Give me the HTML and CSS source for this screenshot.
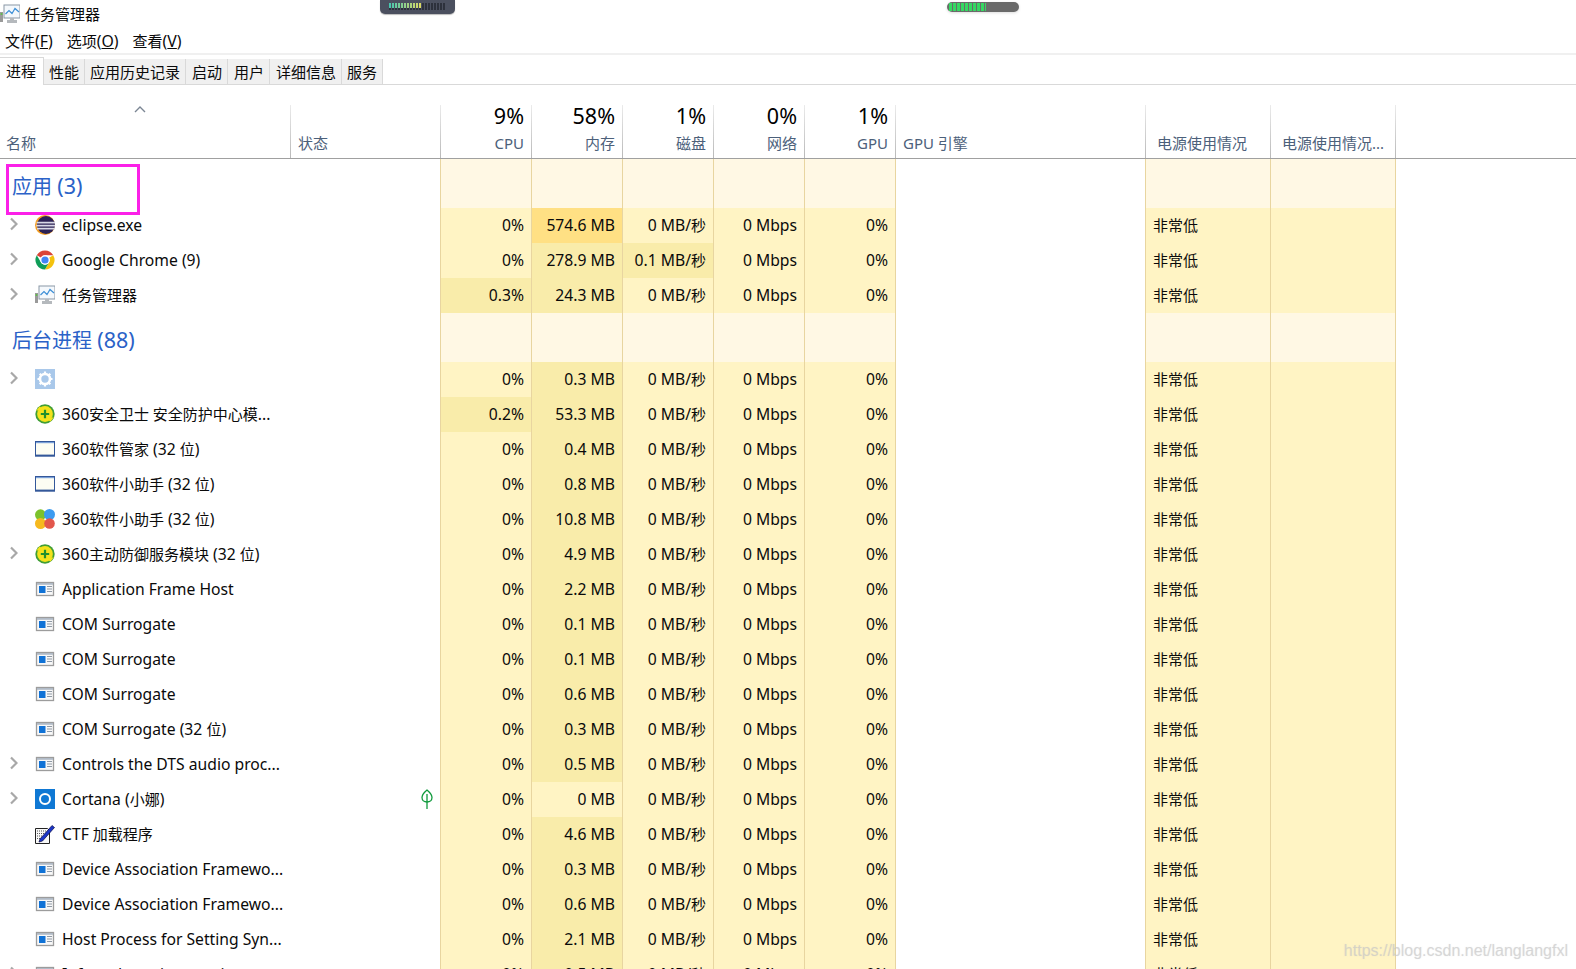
FILE: index.html
```html
<!DOCTYPE html>
<html lang="zh-CN">
<head>
<meta charset="utf-8">
<title>任务管理器</title>
<link rel="stylesheet" href="styles.css">
</head>
<body>
<svg class="sprite" xmlns="http://www.w3.org/2000/svg">
  <symbol id="i-chev" viewBox="0 0 8 14"><path d="M1 1.500 6.500 7 1 12.500" fill="none" stroke="#a8a8a8" stroke-width="2.200"/></symbol>
  <symbol id="i-tm" viewBox="0 0 20 20"><rect x="0" y="8" width="3" height="10" fill="#9a9a9a"/><rect x="0.700" y="9" width="1.600" height="2" fill="#5fc04a"/><rect x="4" y="1" width="16" height="13" fill="#f4f8fc" stroke="#8a97a5"/><path d="M5.500 10 9 6.500l3 3 3-5 4 3.500" fill="none" stroke="#3d8fd6" stroke-width="1.200"/><path d="M10 14h4v2h3v3H7v-3h3z" fill="#b5b9bd"/></symbol>
  <symbol id="i-eclipse" viewBox="0 0 20 20"><circle cx="10" cy="10" r="10" fill="#f39c1f"/><circle cx="11" cy="10" r="9" fill="#2c2255"/><path d="M1.600 6.800h18.800v1.800H1.600zM1.200 9.800h19.600v1.800H1.200zM2 12.800h18v1.800H2z" fill="#d8d8e6"/></symbol>
  <symbol id="i-chrome" viewBox="0 0 20 20"><path d="M10 .5a9.500 9.500 0 0 1 8.230 4.750H10a4.750 4.750 0 0 0-4.110 2.370L1.770 5.250A9.500 9.500 0 0 1 10 .5z" fill="#db4437"/><path d="M18.230 5.250A9.500 9.500 0 0 1 10 19.500l4.110-7.130a4.750 4.750 0 0 0 0-4.740z" fill="#f4c20d"/><path d="M1.770 5.250l4.120 7.120a4.750 4.750 0 0 0 8.220 0L10 19.500A9.500 9.500 0 0 1 1.770 5.250z" fill="#0f9d58"/><circle cx="10" cy="10" r="4.750" fill="#fff"/><circle cx="10" cy="10" r="3.600" fill="#4285f4"/></symbol>
  <symbol id="i-gear" viewBox="0 0 20 20"><rect width="20" height="20" fill="#a9c8ea"/><circle cx="10" cy="10" r="5" fill="none" stroke="#fff" stroke-width="2.600"/><path d="M10 2.500v15M2.500 10h15M4.700 4.700l10.600 10.600M15.300 4.700 4.700 15.300" stroke="#fff" stroke-width="2.200" stroke-dasharray="3 9 3"/></symbol>
  <symbol id="i-360" viewBox="0 0 20 20"><circle cx="10" cy="10" r="9.700" fill="#3f9e35"/><circle cx="10" cy="10" r="7.900" fill="#f3e21c"/><path d="M1 7 4.500 2.500 8 4.500zM19 13l-3.500 4.500-3.500-2z" fill="#f3e21c"/><path d="M10 5.800v8.400M5.800 10h8.400" stroke="#1f8f2e" stroke-width="2.200"/></symbol>
  <symbol id="i-win" viewBox="0 0 20 20"><rect x="0.500" y="2.500" width="19" height="14.500" fill="#fdfdf3" stroke="#34589a"/><rect x="0" y="15.600" width="20" height="1.800" fill="#34589a"/><rect x="1" y="3" width="18" height="1.200" fill="#7aa0d8"/></symbol>
  <symbol id="i-balls" viewBox="0 0 20 20"><circle cx="5.500" cy="5.800" r="5.500" fill="#7cc22c"/><circle cx="14.500" cy="5.500" r="5.500" fill="#3c9bf0"/><circle cx="5.500" cy="14.500" r="5.500" fill="#f6b91e"/><circle cx="14.500" cy="14.500" r="5.300" fill="#e2574c"/></symbol>
  <symbol id="i-app" viewBox="0 0 20 20"><rect x="1.500" y="3.500" width="17" height="13" fill="#f8f8f8" stroke="#9c9c9c" stroke-width="1.300"/><rect x="2" y="4" width="16" height="1.800" fill="#b0bac6"/><rect x="4" y="7" width="6.500" height="7" fill="#1072d6"/><path d="M12 7.500h5M12 10h5M12 12.500h5" stroke="#8f99a5"/></symbol>
  <symbol id="i-cortana" viewBox="0 0 20 20"><rect width="20" height="20" fill="#0f78d4"/><circle cx="10" cy="10" r="5" fill="none" stroke="#fff" stroke-width="2"/></symbol>
  <symbol id="i-ctf" viewBox="0 0 20 20"><path d="M.5 4.500h12l2 2v13H.5z" fill="#f8f8f8" stroke="#222"/><path d="M2 7h9M2 9.500h7M2 12h6M2 14.500h5" stroke="#555" stroke-dasharray="1 1"/><path d="M5 15 17 1.500l2.500 2L7.500 17l-3.500 1z" fill="#1a35c8" stroke="#0a0a40" stroke-width=".7"/></symbol>
  <symbol id="i-leaf" viewBox="0 0 12 20"><path d="M6 1C3 3.500 1 6 1 8.500 1 11 3 13 6 13s5-2 5-4.500C11 6 9 3.500 6 1z" fill="none" stroke="#0f9a3c" stroke-width="1.300"/><path d="M6 5v15" stroke="#0f9a3c" stroke-width="1.300"/></symbol>
</svg>

<div class="meter-dark"><span class="meter-dark-fill"></span></div>
<div class="meter-pill"><span class="meter-pill-fill"></span></div>
<div class="watermark">https://blog.csdn.net/langlangfxl</div>

<header class="titlebar"><svg class="title-icon"><use href="#i-tm"/></svg><span>任务管理器</span></header>
<nav class="menubar">
  <span>文件<span class="paren">(<u>F</u>)</span></span><span>选项<span class="paren">(<u>O</u>)</span></span><span>查看<span class="paren">(<u>V</u>)</span></span>
</nav>
<div class="tabs">
  <span class="tab active">进程</span><span class="tab">性能</span><span class="tab">应用历史记录</span><span class="tab roomy">启动</span><span class="tab roomy">用户</span><span class="tab roomy">详细信息</span><span class="tab">服务</span>
</div>

<main class="table">
  <div class="grid head">
    <div class="hc sortable"><svg class="sort" viewBox="0 0 12 7"><path d="M1 6l5-5 5 5" fill="none" stroke="#7b8694" stroke-width="1.400"/></svg><span class="hl">名称</span></div>
    <div class="hc tight"><span class="hl">状态</span></div>
    <div class="hc num"><span class="pct">9%</span><span class="hl">CPU</span></div>
    <div class="hc num"><span class="pct">58%</span><span class="hl">内存</span></div>
    <div class="hc num"><span class="pct">1%</span><span class="hl">磁盘</span></div>
    <div class="hc num"><span class="pct">0%</span><span class="hl">网络</span></div>
    <div class="hc num"><span class="pct">1%</span><span class="hl">GPU</span></div>
    <div class="hc tight"><span class="hl">GPU 引擎</span></div>
    <div class="hc wide"><span class="hl">电源使用情况</span></div>
    <div class="hc wide"><span class="hl">电源使用情况...</span></div>
  </div>

  <div class="grid group">
    <div class="gname">应用 <span class="en">(3)</span><span class="mark"></span></div><div class="line"></div>
    <div class="fill"></div><div class="fill"></div><div class="fill"></div><div class="fill"></div><div class="fill"></div><div class="line"></div><div class="fill"></div><div class="fill"></div>
  </div>

  <div class="grid row"><div class="name"><svg class="chev"><use href="#i-chev"/></svg><svg class="ico"><use href="#i-eclipse"/></svg>eclipse.exe</div><div class="line"></div><div class="v">0%</div><div class="v hot">574.6 MB</div><div class="v">0 MB/<span class="zh">秒</span></div><div class="v">0 Mbps</div><div class="v">0%</div><div class="line"></div><div class="p">非常低</div><div class="p"></div></div>
  <div class="grid row"><div class="name"><svg class="chev"><use href="#i-chev"/></svg><svg class="ico"><use href="#i-chrome"/></svg>Google Chrome (9)</div><div class="line"></div><div class="v">0%</div><div class="v mid">278.9 MB</div><div class="v mid">0.1 MB/<span class="zh">秒</span></div><div class="v">0 Mbps</div><div class="v">0%</div><div class="line"></div><div class="p">非常低</div><div class="p"></div></div>
  <div class="grid row"><div class="name"><svg class="chev"><use href="#i-chev"/></svg><svg class="ico"><use href="#i-tm"/></svg><span class="zh">任务管理器</span></div><div class="line"></div><div class="v mid">0.3%</div><div class="v mid">24.3 MB</div><div class="v">0 MB/<span class="zh">秒</span></div><div class="v">0 Mbps</div><div class="v">0%</div><div class="line"></div><div class="p">非常低</div><div class="p"></div></div>

  <div class="grid group">
    <div class="gname">后台进程 <span class="en">(88)</span></div><div class="line"></div>
    <div class="fill"></div><div class="fill"></div><div class="fill"></div><div class="fill"></div><div class="fill"></div><div class="line"></div><div class="fill"></div><div class="fill"></div>
  </div>

  <div class="grid row"><div class="name"><svg class="chev"><use href="#i-chev"/></svg><svg class="ico"><use href="#i-gear"/></svg></div><div class="line"></div><div class="v">0%</div><div class="v mid">0.3 MB</div><div class="v">0 MB/<span class="zh">秒</span></div><div class="v">0 Mbps</div><div class="v">0%</div><div class="line"></div><div class="p">非常低</div><div class="p"></div></div>
  <div class="grid row"><div class="name"><span class="chev"></span><svg class="ico"><use href="#i-360"/></svg><span>360<span class="zh">安全卫士 安全防护中心模</span>...</span></div><div class="line"></div><div class="v mid">0.2%</div><div class="v mid">53.3 MB</div><div class="v">0 MB/<span class="zh">秒</span></div><div class="v">0 Mbps</div><div class="v">0%</div><div class="line"></div><div class="p">非常低</div><div class="p"></div></div>
  <div class="grid row"><div class="name"><span class="chev"></span><svg class="ico"><use href="#i-win"/></svg><span>360<span class="zh">软件管家</span> (32 <span class="zh">位</span>)</span></div><div class="line"></div><div class="v">0%</div><div class="v mid">0.4 MB</div><div class="v">0 MB/<span class="zh">秒</span></div><div class="v">0 Mbps</div><div class="v">0%</div><div class="line"></div><div class="p">非常低</div><div class="p"></div></div>
  <div class="grid row"><div class="name"><span class="chev"></span><svg class="ico"><use href="#i-win"/></svg><span>360<span class="zh">软件小助手</span> (32 <span class="zh">位</span>)</span></div><div class="line"></div><div class="v">0%</div><div class="v mid">0.8 MB</div><div class="v">0 MB/<span class="zh">秒</span></div><div class="v">0 Mbps</div><div class="v">0%</div><div class="line"></div><div class="p">非常低</div><div class="p"></div></div>
  <div class="grid row"><div class="name"><span class="chev"></span><svg class="ico"><use href="#i-balls"/></svg><span>360<span class="zh">软件小助手</span> (32 <span class="zh">位</span>)</span></div><div class="line"></div><div class="v">0%</div><div class="v mid">10.8 MB</div><div class="v">0 MB/<span class="zh">秒</span></div><div class="v">0 Mbps</div><div class="v">0%</div><div class="line"></div><div class="p">非常低</div><div class="p"></div></div>
  <div class="grid row"><div class="name"><svg class="chev"><use href="#i-chev"/></svg><svg class="ico"><use href="#i-360"/></svg><span>360<span class="zh">主动防御服务模块</span> (32 <span class="zh">位</span>)</span></div><div class="line"></div><div class="v">0%</div><div class="v mid">4.9 MB</div><div class="v">0 MB/<span class="zh">秒</span></div><div class="v">0 Mbps</div><div class="v">0%</div><div class="line"></div><div class="p">非常低</div><div class="p"></div></div>
  <div class="grid row"><div class="name"><span class="chev"></span><svg class="ico"><use href="#i-app"/></svg>Application Frame Host</div><div class="line"></div><div class="v">0%</div><div class="v mid">2.2 MB</div><div class="v">0 MB/<span class="zh">秒</span></div><div class="v">0 Mbps</div><div class="v">0%</div><div class="line"></div><div class="p">非常低</div><div class="p"></div></div>
  <div class="grid row"><div class="name"><span class="chev"></span><svg class="ico"><use href="#i-app"/></svg>COM Surrogate</div><div class="line"></div><div class="v">0%</div><div class="v mid">0.1 MB</div><div class="v">0 MB/<span class="zh">秒</span></div><div class="v">0 Mbps</div><div class="v">0%</div><div class="line"></div><div class="p">非常低</div><div class="p"></div></div>
  <div class="grid row"><div class="name"><span class="chev"></span><svg class="ico"><use href="#i-app"/></svg>COM Surrogate</div><div class="line"></div><div class="v">0%</div><div class="v mid">0.1 MB</div><div class="v">0 MB/<span class="zh">秒</span></div><div class="v">0 Mbps</div><div class="v">0%</div><div class="line"></div><div class="p">非常低</div><div class="p"></div></div>
  <div class="grid row"><div class="name"><span class="chev"></span><svg class="ico"><use href="#i-app"/></svg>COM Surrogate</div><div class="line"></div><div class="v">0%</div><div class="v mid">0.6 MB</div><div class="v">0 MB/<span class="zh">秒</span></div><div class="v">0 Mbps</div><div class="v">0%</div><div class="line"></div><div class="p">非常低</div><div class="p"></div></div>
  <div class="grid row"><div class="name"><span class="chev"></span><svg class="ico"><use href="#i-app"/></svg><span>COM Surrogate (32 <span class="zh">位</span>)</span></div><div class="line"></div><div class="v">0%</div><div class="v mid">0.3 MB</div><div class="v">0 MB/<span class="zh">秒</span></div><div class="v">0 Mbps</div><div class="v">0%</div><div class="line"></div><div class="p">非常低</div><div class="p"></div></div>
  <div class="grid row"><div class="name"><svg class="chev"><use href="#i-chev"/></svg><svg class="ico"><use href="#i-app"/></svg>Controls the DTS audio proc...</div><div class="line"></div><div class="v">0%</div><div class="v mid">0.5 MB</div><div class="v">0 MB/<span class="zh">秒</span></div><div class="v">0 Mbps</div><div class="v">0%</div><div class="line"></div><div class="p">非常低</div><div class="p"></div></div>
  <div class="grid row"><div class="name"><svg class="chev"><use href="#i-chev"/></svg><svg class="ico"><use href="#i-cortana"/></svg><span>Cortana (<span class="zh">小娜</span>)</span></div><div class="line status"><svg class="leaf"><use href="#i-leaf"/></svg></div><div class="v">0%</div><div class="v">0 MB</div><div class="v">0 MB/<span class="zh">秒</span></div><div class="v">0 Mbps</div><div class="v">0%</div><div class="line"></div><div class="p">非常低</div><div class="p"></div></div>
  <div class="grid row"><div class="name"><span class="chev"></span><svg class="ico"><use href="#i-ctf"/></svg><span>CTF <span class="zh">加载程序</span></span></div><div class="line"></div><div class="v">0%</div><div class="v mid">4.6 MB</div><div class="v">0 MB/<span class="zh">秒</span></div><div class="v">0 Mbps</div><div class="v">0%</div><div class="line"></div><div class="p">非常低</div><div class="p"></div></div>
  <div class="grid row"><div class="name"><span class="chev"></span><svg class="ico"><use href="#i-app"/></svg>Device Association Framewo...</div><div class="line"></div><div class="v">0%</div><div class="v mid">0.3 MB</div><div class="v">0 MB/<span class="zh">秒</span></div><div class="v">0 Mbps</div><div class="v">0%</div><div class="line"></div><div class="p">非常低</div><div class="p"></div></div>
  <div class="grid row"><div class="name"><span class="chev"></span><svg class="ico"><use href="#i-app"/></svg>Device Association Framewo...</div><div class="line"></div><div class="v">0%</div><div class="v mid">0.6 MB</div><div class="v">0 MB/<span class="zh">秒</span></div><div class="v">0 Mbps</div><div class="v">0%</div><div class="line"></div><div class="p">非常低</div><div class="p"></div></div>
  <div class="grid row"><div class="name"><span class="chev"></span><svg class="ico"><use href="#i-app"/></svg>Host Process for Setting Syn...</div><div class="line"></div><div class="v">0%</div><div class="v mid">2.1 MB</div><div class="v">0 MB/<span class="zh">秒</span></div><div class="v">0 Mbps</div><div class="v">0%</div><div class="line"></div><div class="p">非常低</div><div class="p"></div></div>
  <div class="grid row"><div class="name"><svg class="chev"><use href="#i-chev"/></svg><svg class="ico"><use href="#i-app"/></svg>Infrared monitor service</div><div class="line"></div><div class="v">0%</div><div class="v mid">0.5 MB</div><div class="v">0 MB/<span class="zh">秒</span></div><div class="v">0 Mbps</div><div class="v">0%</div><div class="line"></div><div class="p">非常低</div><div class="p"></div></div>
</main>
</body>
</html>
```

FILE: styles.css
```css
* { box-sizing: border-box; }
html, body { margin: 0; height: 100%; }
body {
  position: relative;
  height: 969px;
  overflow: hidden;
  background: #fff;
  color: #0a0a0a;
  font: 15px/20px "Noto Sans", "Noto Sans CJK SC", sans-serif;
}
.sprite { display: none; }
.zh { font-size: 15px; }
.paren { font-size: 15.8px; }

.titlebar { height: 28px; display: flex; align-items: center; gap: 5px; }
.title-icon { width: 20px; height: 20px; }
.menubar {
  height: 27px;
  padding: 1px 0 0 5px;
  display: flex;
  align-items: center;
  gap: 14px;
  border-bottom: 2px solid #f0f0f0;
}
.tabs {
  height: 30px;
  display: flex;
  align-items: flex-end;
  border-bottom: 1px solid #d9d9d9;
}
.tab {
  height: 25px;
  padding: 0 5px;
  line-height: 26px;
  background: #f0f0f0;
  border-right: 1px solid #d9d9d9;
}
.tab.roomy { padding: 0 5px 0 6px; }
.tab.active {
  width: 44px;
  height: 28px;
  padding: 0 6px;
  line-height: 27px;
  background: #fff;
  border: 1px solid #d9d9d9;
  border-width: 1px 1px 0 0;
  margin-bottom: -1px;
  position: relative;
}

.table { margin-top: 20px; }
.grid { display: grid; grid-template-columns: 291px 150px 91px 91px 91px 91px 91px 250px 125px 125px; width: 1396px; }

.head { height: 54px; width: 1576px; border-bottom: 1px solid #a0a0a0; }
.hc {
  height: 53px;
  padding: 0 8px 5px;
  display: flex;
  flex-direction: column;
  justify-content: flex-end;
  position: relative;
  border-right: 1px solid #c4c4c4;
  border-image: linear-gradient(#ececec, #b8b8b8) 1;
}
.sortable { padding-left: 6px; }
.tight { padding-left: 7px; }
.num { align-items: flex-end; padding-right: 7px; }
.wide { padding-left: 11px; padding-right: 0; }
.hl { color: #4c607a; white-space: nowrap; }
.pct { font-size: 21.5px; line-height: 26px; color: #000; margin-bottom: 4px; }
.sort { position: absolute; left: 134px; top: 1px; width: 12px; height: 7px; }

.group { height: 49px; }
.gname {
  position: relative;
  padding: 7px 0 0 12px;
  font-size: 20px;
  line-height: 40px;
  color: #2b62c8;
  white-space: nowrap;
}
.gname .en { font-size: 21.5px; }
.mark {
  position: absolute;
  left: 6px;
  top: 5px;
  width: 134px;
  height: 51px;
  border: 3px solid #fb20e8;
  z-index: 2;
}
.line { border-right: 1px solid #e8d5a0; }
.fill { background: #fff8e4; border-right: 1px solid #e8d5a0; }

.row { height: 35px; line-height: 34px; font-size: 15.7px; }
.name { display: flex; align-items: center; white-space: nowrap; padding: 0 0 1px 10px; }
.chev { width: 8px; height: 14px; margin: -2px 17px 0 0; flex: none; }
.ico { width: 20px; height: 20px; margin-right: 7px; flex: none; }
.status { display: flex; justify-content: flex-end; align-items: center; padding-right: 7px; }
.leaf { width: 12px; height: 20px; margin-top: -2px; }
.v { background: #fff4c4; border-right: 1px solid #e8d5a0; text-align: right; padding-right: 7px; white-space: nowrap; }
.v.mid { background: #f9ecaa; }
.v.hot { background: #ffe084; }
.p { background: #fff4c4; border-right: 1px solid #e8d5a0; padding-left: 7px; font-size: 15px; }

.meter-dark {
  position: absolute;
  left: 380px;
  top: 0;
  width: 75px;
  height: 14px;
  background: #4b505f;
  border-radius: 0 0 5px 5px;
  box-shadow: 0 1px 1px #bbb;
  z-index: 3;
}
.meter-dark::before {
  content: "";
  position: absolute;
  left: 9px;
  top: 3px;
  width: 57px;
  height: 7px;
  background: repeating-linear-gradient(90deg, #2d313c 0 2px, transparent 2px 3px);
}
.meter-dark-fill {
  position: absolute;
  left: 9px;
  top: 3px;
  width: 33px;
  height: 5px;
  background: linear-gradient(90deg, #45c6b0, #e2dc62);
  -webkit-mask: repeating-linear-gradient(90deg, #000 0 2px, transparent 2px 3px);
  mask: repeating-linear-gradient(90deg, #000 0 2px, transparent 2px 3px);
}
.meter-pill {
  position: absolute;
  left: 947px;
  top: 2px;
  width: 72px;
  height: 10px;
  background: #6a6a6a;
  border-radius: 5px;
  box-shadow: 0 1px 3px #ddd;
  z-index: 3;
}
.meter-pill-fill {
  position: absolute;
  left: 2px;
  top: 1px;
  width: 37px;
  height: 8px;
  background: repeating-linear-gradient(90deg, #35d862 0 3px, #6a6a6a 3px 4px);
}
.watermark {
  position: absolute;
  right: 8px;
  top: 941px;
  font: 16px/20px "Liberation Sans", sans-serif;
  color: rgba(195, 195, 195, .5);
  text-shadow: 0 0 1px rgba(205, 205, 205, .5);
  z-index: 3;
}
```
